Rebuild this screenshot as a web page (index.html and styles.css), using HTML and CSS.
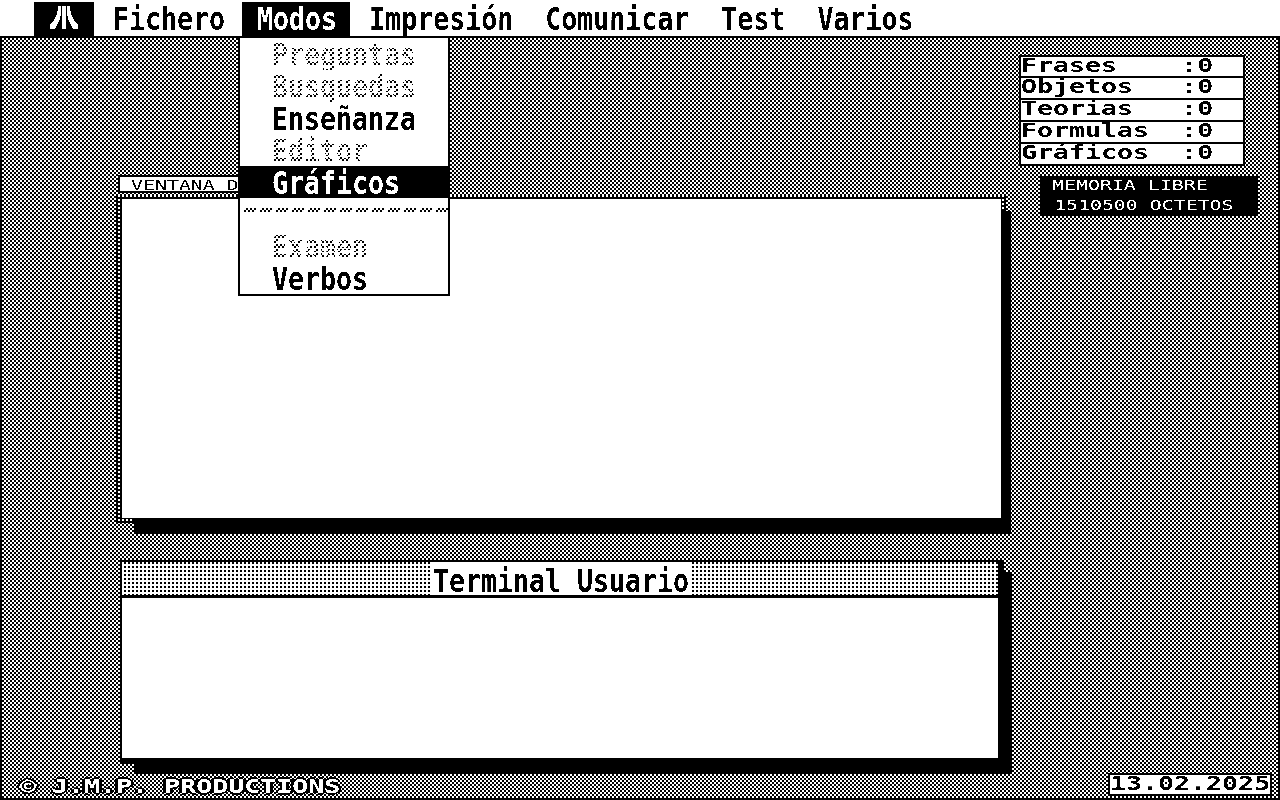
FILE: index.html
```html
<!DOCTYPE html>
<html lang="es">
<head>
  <meta charset="UTF-8">
  <title>Terminal Usuario</title>
  <link rel="stylesheet" href="styles.css">
</head>
<body>
  <div class="screen">
    <!-- ===== MENU BAR ===== -->
    <nav class="menubar">
      <div class="title logo">
        <svg width="60" height="34" viewBox="0 0 60 34" shape-rendering="crispEdges">
          <path d="M28 4h4v23h-4z M24 4h3v7l-1 6-2 4-3 6h-5v-4l4-5 3-6 1-6z M36 4h-3v7l1 6 2 4 3 6h5v-4l-4-5-3-6-1-6z" fill="#fff"/>
        </svg>
      </div>
      <div class="title"><span class="tall">Fichero</span></div>
      <div class="title active"><span class="tall">Modos</span></div>
      <div class="title"><span class="tall">Impresión</span></div>
      <div class="title"><span class="tall">Comunicar</span></div>
      <div class="title"><span class="tall">Test</span></div>
      <div class="title"><span class="tall">Varios</span></div>
    </nav>

    <!-- ===== DESKTOP ===== -->
    <main class="desktop">
      <!-- Graphics window -->
      <div class="window win-graph">
        <div class="win-shadow"></div>
        <div class="win-panel"></div>
      </div>
      <div class="win-tab"><span class="thin">VENTANA D</span></div>

      <!-- Terminal window -->
      <div class="window win-term">
        <div class="win-shadow"></div>
        <div class="win-panel">
          <div class="win-title"><span class="win-name"><span class="tall">Terminal Usuario</span></span></div>
        </div>
      </div>

      <!-- Counters -->
      <div class="counters">
        <div class="counter"><span class="wide">Frases    :0</span></div>
        <div class="counter"><span class="wide">Objetos   :0</span></div>
        <div class="counter"><span class="wide">Teorias   :0</span></div>
        <div class="counter"><span class="wide">Formulas  :0</span></div>
        <div class="counter"><span class="wide">Gráficos  :0</span></div>
      </div>

      <div class="memory">
        <span class="thin">MEMORIA LIBRE</span>
        <span class="thin second">1510500 OCTETOS</span>
      </div>

      <!-- Footer bits -->
      <div class="credit"><span class="wide">© J.M.P. PRODUCTIONS</span></div>
      <div class="date"><span class="wide">13.02.2025</span></div>
    </main>

    <!-- ===== OPEN MENU ===== -->
    <div class="dropdown">
      <div class="item off"><span class="tall">Preguntas</span></div>
      <div class="item off"><span class="tall">Busquedas</span></div>
      <div class="item"><span class="tall">Enseñanza</span></div>
      <div class="item off"><span class="tall">Editor</span></div>
      <div class="item selected"><span class="tall">Gráficos</span></div>
      <div class="item sep"><div class="rule"></div></div>
      <div class="item off"><span class="tall">Examen</span></div>
      <div class="item"><span class="tall">Verbos</span></div>
    </div>
  </div>
</body>
</html>
```

FILE: styles.css
```css
html, body { margin: 0; padding: 0; width: 100%; height: 100%; background: #fff; }

/* whole screen is pushed to pure black and white, like the old monitor */
.screen {
  position: relative;
  width: 1280px; height: 800px;
  overflow: hidden;
  background: #fff;
  color: #000;
  filter: grayscale(1) contrast(100);
  display: flex; flex-direction: column;
}

/* ---------------- Text styles ---------------- */
.tall, .wide, .thin { display: inline-block; white-space: pre; }
.tall {
  font: bold 26.6px/26px "DejaVu Sans Mono", monospace;
  transform: scaleY(1.18);
  transform-origin: left center;
}
.wide {
  font: bold 19px/18px "DejaVu Sans Mono", monospace;
  transform: scaleX(1.4);
  transform-origin: left center;
}
.thin {
  font: 14px/16px "DejaVu Sans Mono", monospace;
  transform: scaleX(1.42);
  transform-origin: left center;
}

/* ---------------- Menu bar ---------------- */
.menubar {
  display: flex; gap: 4px;
  height: 34px;
  padding: 2px 0 0 34px;
  flex: none;
}
.title { display: flex; align-items: center; padding: 0 14px; }
.title .tall { margin-left: 1px; margin-right: -1px; }
.title.active, .title.logo { background: #000; color: #fff; }
.title.logo { padding: 0; width: 60px; }
.title.logo svg { display: block; }

/* ---------------- Desktop ---------------- */
.desktop {
  position: relative;
  flex: 1;
  border: 2px solid #000;
  background-color: #fff;
  background-image: conic-gradient(#000 25%, #fff 0 50%, #000 0 75%, #fff 0);
  background-size: 4px 4px;
}

/* ---------------- Windows ---------------- */
.window { position: absolute; }
.win-shadow { position: absolute; background: #000; }
.win-panel { position: absolute; box-sizing: border-box; background: #fff; }

/* graphics window keeps a dotted frame, its shadow sits on top of that */
.win-graph {
  left: 114px; top: 157px;
  width: 890px; height: 329px;
  background-color: #000;
  background-image: conic-gradient(#fff 25%, #000 0);
  background-size: 4px 4px;
}
.win-graph .win-shadow { left: 18px; top: 16px; width: 877px; height: 323px; }
.win-graph .win-panel { left: 6px; top: 4px; width: 879px; height: 319px; }

.win-term { left: 118px; top: 522px; width: 884px; height: 204px; }
.win-term .win-shadow { left: 14px; right: -8px; top: 12px; bottom: -10px; }
.win-term .win-panel { inset: 0; border: solid #000; border-width: 2px 6px 6px 2px; }

.win-title {
  display: flex; justify-content: center; align-items: center;
  height: 33px;
  border-bottom: 3px solid #000;
  background-image: conic-gradient(#000 25%, #fff 0);
  background-size: 4px 4px;
}
.win-name { display: flex; align-items: center; height: 33px; background: #fff; padding: 0 2px; }
.win-name .tall { position: relative; top: 2px; left: 1px; }

.win-tab {
  position: absolute;
  left: 116px; top: 137px;
  width: 200px; height: 14px;
  padding-left: 11px;
  border: solid #000;
  border-width: 2px 0 2px 2px;
  background: #fff;
  line-height: 12px;
}

/* ---------------- Counters ---------------- */
.counters {
  position: absolute;
  left: 1017px; top: 17px;
  width: 226px;
  box-sizing: border-box;
  border: 2px solid #000;
  border-bottom-width: 0;
  background: #fff;
  display: flex; flex-direction: column;
}
.counter { display: flex; align-items: center; height: 20px; border-bottom: 2px solid #000; }
.counter:first-child { height: 19px; }
.counter .wide { position: relative; top: -2px; }

.memory {
  position: absolute;
  left: 1038px; top: 138px;
  width: 218px; height: 40px;
  padding: 1px 0 0 12px;
  box-sizing: border-box;
  background: #000;
  color: #fff;
  display: flex; flex-direction: column; align-items: flex-start; gap: 4px;
}
.memory .second { margin-left: 2px; }

/* ---------------- Footer bits ---------------- */
.credit {
  position: absolute;
  left: 18px; bottom: 1px;
  color: #fff;
  text-shadow: 2px 0 #000, -2px 0 #000, 0 2px #000, 0 -2px #000;
}
.date {
  position: absolute;
  right: 6px; bottom: 2px;
  display: flex; align-items: center;
  width: 160px; height: 19px;
  border: 2px solid #000;
  background: #fff;
}
.date .wide { position: relative; top: -2px; }

/* ---------------- Open menu ---------------- */
.dropdown {
  position: absolute;
  left: 238px; top: 36px;
  width: 208px;
  border: 2px solid #000;
  background: #fff;
  display: flex; flex-direction: column;
}
.item { display: flex; align-items: center; height: 32px; padding-left: 32px; }
.item .tall { position: relative; top: 1px; }
.item.selected { background: #000; color: #fff; }
.item.off .tall {
  color: transparent;
  background-image: conic-gradient(#000 25%, #fff 0 50%, #000 0 75%, #fff 0);
  background-size: 4px 4px;
  -webkit-background-clip: text;
  background-clip: text;
}
.item.sep { padding: 0; }
/* dithered dashes, the white stripes cut the checker into pieces */
.rule {
  width: 100%; height: 4px;
  margin-top: -8px;
  background-image:
    repeating-linear-gradient(90deg, #fff 0 4px, transparent 4px 16px),
    conic-gradient(#000 25%, #fff 0 50%, #000 0 75%, #fff 0);
  background-size: auto, 4px 4px;
}
```
